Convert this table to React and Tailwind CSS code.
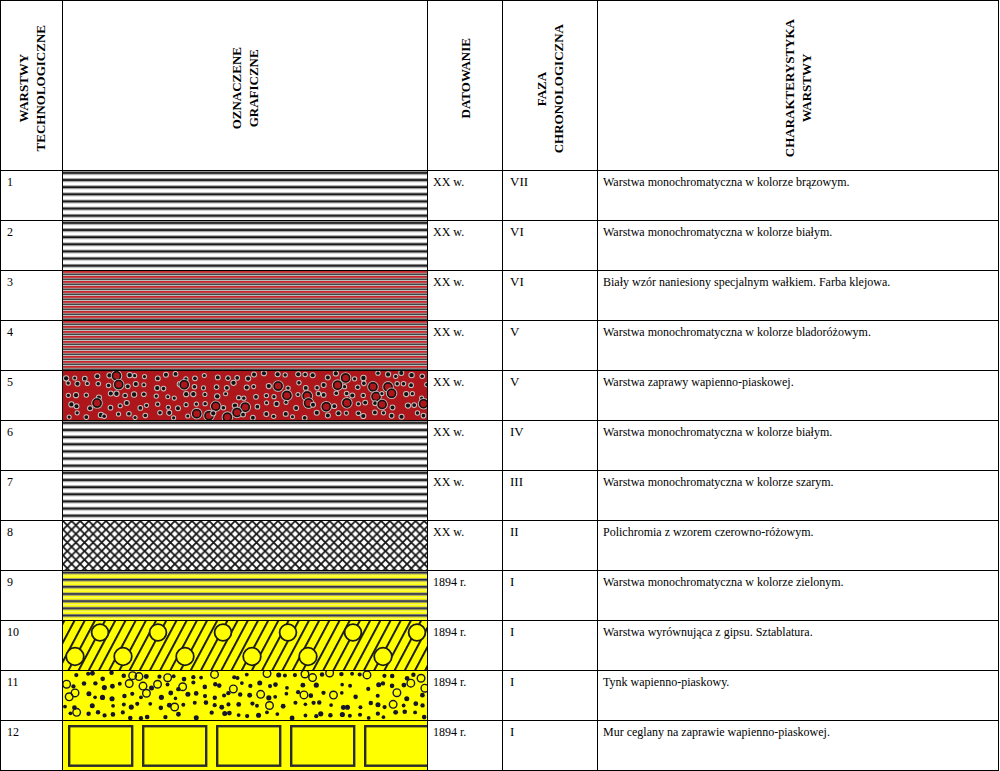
import React from 'react';

const W = 364;
const H = 49;

// simple seeded random, so the dot patterns stay the same every render
function makeRng(seed) {
  let s = seed >>> 0;
  return () => {
    s = (Math.imul(s, 1664525) + 1013904223) >>> 0;
    return s / 4294967296;
  };
}

function Stripes({ id, period, bg, bands }) {
  return (
    <svg width={W} height={H} className="block">
      <defs>
        <pattern id={id} width={W} height={period} patternUnits="userSpaceOnUse">
          <rect width={W} height={period} fill={bg} />
          {bands.map(([y, h, c], i) => (
            <rect key={i} x="0" y={y} width={W} height={h} fill={c} />
          ))}
        </pattern>
      </defs>
      <rect width={W} height={H} fill={`url(#${id})`} />
    </svg>
  );
}

const greyLines = {
  period: 50 / 7,
  bg: '#ffffff',
  bands: [
    [0, 1, '#9a9a9a'],
    [1, 1.8, '#141414'],
    [2.8, 1, '#8c8c8c'],
  ],
};

const redLines = {
  period: 5,
  bg: '#d2d2d2',
  bands: [
    [0, 1.9, '#c4272c'],
    [1.9, 0.7, '#e7a9a9'],
    [2.6, 1.3, '#2a2c2c'],
    [3.9, 0.4, '#8a8a8a'],
  ],
};

const yellowLines = {
  period: 50 / 7,
  bg: '#ffff00',
  bands: [
    [0, 0.9, '#9a9a78'],
    [0.9, 1.6, '#1c1c4e'],
    [2.5, 0.9, '#a0a080'],
    [4.7, 0.8, '#f4f4a0'],
  ],
};

const redDots = (() => {
  const r = makeRng(7);
  const out = [];
  for (let j = 0; j < 5; j++) {
    for (let i = 0; i < 37; i++) {
      const x = (i + 0.15 + 0.7 * r()) * 9.9;
      const y = (j + 0.2 + 0.6 * r()) * 9.8;
      const t = r();
      out.push({ x, y, big: t < 0.13, rad: 1.5 + r() * 0.7 });
    }
  }
  return out;
})();

const yellowDots = (() => {
  const r = makeRng(21);
  const out = [];
  for (let j = 0; j < 5; j++) {
    for (let i = 0; i < 40; i++) {
      const x = (i + 0.15 + 0.7 * r()) * 9.1;
      const y = (j + 0.15 + 0.7 * r()) * 9.8;
      const t = r();
      if (t > 0.16 && t < 0.24) continue;
      out.push({ x, y, ring: t < 0.16, rad: 1.8 + r() * 0.8 });
    }
  }
  return out;
})();

function RedGravel() {
  return (
    <svg width={W} height={H} className="block">
      <rect width={W} height={H} fill="#ad171b" />
      {redDots.map((d, i) =>
        d.big ? (
          <g key={i}>
            <circle cx={d.x} cy={d.y} r="5.2" fill="none" stroke="#b9b0b0" strokeWidth="1.2" />
            <circle cx={d.x} cy={d.y} r="4" fill="#ad171b" stroke="#111" strokeWidth="1.5" />
          </g>
        ) : (
          <g key={i}>
            <circle cx={d.x} cy={d.y} r={d.rad + 1} fill="#c9c0c0" />
            <circle cx={d.x} cy={d.y} r={d.rad} fill="#111" />
          </g>
        )
      )}
    </svg>
  );
}

function CrossHatch() {
  return (
    <svg width={W} height={H} className="block">
      <defs>
        <pattern id="hatch" width="8.6" height="8.6" patternUnits="userSpaceOnUse">
          <rect width="8.6" height="8.6" fill="#fff" />
          <path d="M0 0L8.6 8.6M8.6 0L0 8.6" stroke="#151515" strokeWidth="1.8" />
        </pattern>
      </defs>
      <rect width={W} height={H} fill="url(#hatch)" />
    </svg>
  );
}

const topCircles = [37, 95, 160, 225, 290, 354];
const bottomCircles = [12, 60, 122, 189, 245, 320];

function Gypsum() {
  return (
    <svg width={W} height={H} className="block">
      <defs>
        <pattern id="diag" width="9" height="20" patternUnits="userSpaceOnUse" patternTransform="rotate(28)">
          <rect width="9" height="20" fill="#ffff00" />
          <rect x="0" y="0" width="1.9" height="20" fill="#141414" />
        </pattern>
      </defs>
      <rect width={W} height={H} fill="url(#diag)" />
      {topCircles.map((x) => (
        <circle key={'t' + x} cx={x} cy="11.5" r="8.4" fill="#ffff00" stroke="#1a1a1a" strokeWidth="1.8" />
      ))}
      {bottomCircles.map((x) => (
        <circle key={'b' + x} cx={x} cy="35.5" r="8.8" fill="#ffff00" stroke="#1a1a1a" strokeWidth="1.8" />
      ))}
    </svg>
  );
}

function YellowGravel() {
  return (
    <svg width={W} height={H} className="block">
      <rect width={W} height={H} fill="#ffff00" />
      {yellowDots.map((d, i) =>
        d.ring ? (
          <circle key={i} cx={d.x} cy={d.y} r="3.8" fill="none" stroke="#151530" strokeWidth="1.4" />
        ) : (
          <circle key={i} cx={d.x} cy={d.y} r={d.rad} fill="#151530" />
        )
      )}
    </svg>
  );
}

function Bricks() {
  return (
    <svg width={W} height={H} className="block">
      <rect width={W} height={H} fill="#ffff00" />
      {[5, 79, 153, 227, 301].map((x) => (
        <rect key={x} x={x + 1.2} y="5.2" width="63" height="39.5" fill="#ffff00" stroke="#2b2b2b" strokeWidth="2.4" />
      ))}
    </svg>
  );
}

function Graphic({ kind, id }) {
  if (kind === 'grey') return <Stripes id={id} {...greyLines} />;
  if (kind === 'red') return <Stripes id={id} {...redLines} />;
  if (kind === 'yellow') return <Stripes id={id} {...yellowLines} />;
  if (kind === 'redgravel') return <RedGravel />;
  if (kind === 'hatch') return <CrossHatch />;
  if (kind === 'gypsum') return <Gypsum />;
  if (kind === 'gravel') return <YellowGravel />;
  return <Bricks />;
}

const rows = [
  { n: '1', date: 'XX w.', phase: 'VII', desc: 'Warstwa monochromatyczna w kolorze brązowym.', kind: 'grey' },
  { n: '2', date: 'XX w.', phase: 'VI', desc: 'Warstwa monochromatyczna w kolorze białym.', kind: 'grey' },
  { n: '3', date: 'XX w.', phase: 'VI', desc: 'Biały wzór naniesiony specjalnym wałkiem. Farba klejowa.', kind: 'red' },
  { n: '4', date: 'XX w.', phase: 'V', desc: 'Warstwa monochromatyczna w kolorze bladoróżowym.', kind: 'red' },
  { n: '5', date: 'XX w.', phase: 'V', desc: 'Warstwa zaprawy wapienno-piaskowej.', kind: 'redgravel' },
  { n: '6', date: 'XX w.', phase: 'IV', desc: 'Warstwa monochromatyczna w kolorze białym.', kind: 'grey' },
  { n: '7', date: 'XX w.', phase: 'III', desc: 'Warstwa monochromatyczna w kolorze szarym.', kind: 'grey' },
  { n: '8', date: 'XX w.', phase: 'II', desc: 'Polichromia z wzorem czerowno-różowym.', kind: 'hatch' },
  { n: '9', date: '1894 r.', phase: 'I', desc: 'Warstwa monochromatyczna w kolorze zielonym.', kind: 'yellow' },
  { n: '10', date: '1894 r.', phase: 'I', desc: 'Warstwa wyrównująca z gipsu. Sztablatura.', kind: 'gypsum' },
  { n: '11', date: '1894 r.', phase: 'I', desc: 'Tynk wapienno-piaskowy.', kind: 'gravel' },
  { n: '12', date: '1894 r.', phase: 'I', desc: 'Mur ceglany na zaprawie wapienno-piaskowej.', kind: 'bricks' },
];

function HeadCell({ children, extra = 'pt-[6px]' }) {
  return (
    <div className={`flex items-center justify-center border-r border-b border-black ${extra}`}>
      <div className="rotate-180 text-center text-[13px] font-bold leading-[17px] [writing-mode:vertical-rl]">
        {children}
      </div>
    </div>
  );
}

export default function App() {
  return (
    <div className="min-h-screen bg-white">
      <div className="grid w-[999px] grid-cols-[62px_365px_75px_95px_401px] grid-rows-[170px_repeat(12,50px)] border-t border-l border-black font-['Liberation_Serif',serif] text-black">
        <HeadCell>
          WARSTWY
          <br />
          TECHNOLOGICZNE
        </HeadCell>
        <HeadCell>
          OZNACZENE
          <br />
          GRAFICZNE
        </HeadCell>
        <HeadCell extra="pb-[14px]">DATOWANIE</HeadCell>
        <HeadCell>
          FAZA
          <br />
          CHRONOLOGICZNA
        </HeadCell>
        <HeadCell>
          CHARAKTERYSTYKA
          <br />
          WARSTWY
        </HeadCell>

        {rows.map((r, i) => (
          <React.Fragment key={r.n}>
            <div className="border-r border-b border-black px-[6px] pt-[4px] text-[12px] leading-[14px]">{r.n}</div>
            <div className="overflow-hidden border-r border-b border-black">
              <Graphic kind={r.kind} id={`p${i}`} />
            </div>
            <div className="border-r border-b border-black px-[5px] pt-[4px] text-[12px] leading-[14px]">{r.date}</div>
            <div className="border-r border-b border-black px-[7px] pt-[4px] text-[13px] leading-[14px]">{r.phase}</div>
            <div className="border-r border-b border-black px-[5px] pt-[4px] text-[12px] leading-[14px]">{r.desc}</div>
          </React.Fragment>
        ))}
      </div>
    </div>
  );
}
